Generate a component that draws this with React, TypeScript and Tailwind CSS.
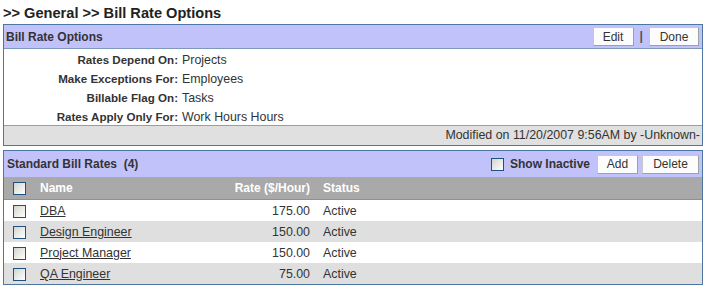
import React from "react";

const Check = () => (
  <span className="inline-block w-[13px] h-[13px] border border-[#1c5180] bg-gradient-to-br from-[#d4d4ce] to-white shrink-0" />
);

const Btn = ({ label, className = "" }: { label: string; className?: string }) => (
  <button
    className={
      "h-[19px] border border-[#c8c8c8] border-b-[#a0a0a0] border-r-[#a0a0a0] bg-[#fcfcfc] text-[12px] leading-none text-[#333] " +
      className
    }
  >
    {label}
  </button>
);

const options = [
  ["Rates Depend On:", "Projects"],
  ["Make Exceptions For:", "Employees"],
  ["Billable Flag On:", "Tasks"],
  ["Rates Apply Only For:", "Work Hours Hours"],
];

const rates = [
  { name: "DBA", rate: "175.00", status: "Active" },
  { name: "Design Engineer", rate: "150.00", status: "Active" },
  { name: "Project Manager", rate: "150.00", status: "Active" },
  { name: "QA Engineer", rate: "75.00", status: "Active" },
];

export default function App() {
  return (
    <div className="w-[707px] h-[290px] bg-white text-[#333] text-[12.4px] font-['Liberation_Sans',Arial,sans-serif]">
      <h1 className="pl-[3px] pt-[4px] h-[24px] text-[14.6px] font-bold leading-[18px] text-[#222]">
        &gt;&gt; General &gt;&gt; Bill Rate Options
      </h1>

      {/* options panel */}
      <div className="ml-[3px] w-[700px] border border-[#4f76a3]">
        <div className="flex items-center justify-between h-[24px] bg-[#c2c2fa] border-b border-[#7e98bc] pl-[2px] pr-[3px]">
          <span className="font-bold text-[12px] text-[#333]">Bill Rate Options</span>
          <div className="flex items-center">
            <Btn label="Edit" className="w-[41px]" />
            <span className="mx-[6px] font-bold text-[#555]">|</span>
            <Btn label="Done" className="w-[50px]" />
          </div>
        </div>
        <div className="pt-[2px] h-[76px]">
          {options.map(([label, value]) => (
            <div key={label} className="flex h-[19px] items-baseline leading-[18px]">
              <span className="w-[174px] text-right font-bold text-[11.6px] text-[#333]">{label}</span>
              <span className="pl-[4px]">{value}</span>
            </div>
          ))}
        </div>
        <div className="h-[20px] flex items-center justify-end pr-[2px] bg-[#e0e0e0] border-t border-[#8aa0bd]">
          Modified on 11/20/2007 9:56AM by -Unknown-
        </div>
      </div>

      {/* rates panel */}
      <div className="mt-[4px] ml-[3px] w-[700px] border border-[#4f76a3]">
        <div className="flex items-center justify-between h-[26px] bg-[#c2c2fa] pl-[3px] pr-[3px]">
          <span className="font-bold text-[12px] text-[#333]">Standard Bill Rates&nbsp; (4)</span>
          <div className="flex items-center">
            <Check />
            <span className="ml-[6px] mr-[7px] font-bold text-[12px] text-[#333]">Show Inactive</span>
            <Btn label="Add" className="w-[41px]" />
            <Btn label="Delete" className="ml-[4px] w-[57px]" />
          </div>
        </div>
        <div className="flex items-center h-[23px] bg-[#a9a9a9] border-b border-[#7b93b4] font-bold text-[12px] text-white whitespace-nowrap">
          <span className="pl-[9px] flex">
            <Check />
          </span>
          <span className="pl-[14px] w-[194px]">Name</span>
          <span className="w-[90px] text-right">Rate ($/Hour)</span>
          <span className="pl-[13px]">Status</span>
        </div>
        {rates.map((r, i) => (
          <div
            key={r.name}
            className={
              "flex items-center h-[21px] pt-[1px] whitespace-nowrap " + (i % 2 === 1 ? "bg-[#dfdfdf]" : "bg-white")
            }
          >
            <span className="pl-[9px] flex">
              <Check />
            </span>
            <span className="pl-[14px] w-[194px]">
              <a href="#" className="underline text-[#333]">
                {r.name}
              </a>
            </span>
            <span className="w-[90px] text-right">{r.rate}</span>
            <span className="pl-[13px]">{r.status}</span>
          </div>
        ))}
      </div>
    </div>
  );
}
